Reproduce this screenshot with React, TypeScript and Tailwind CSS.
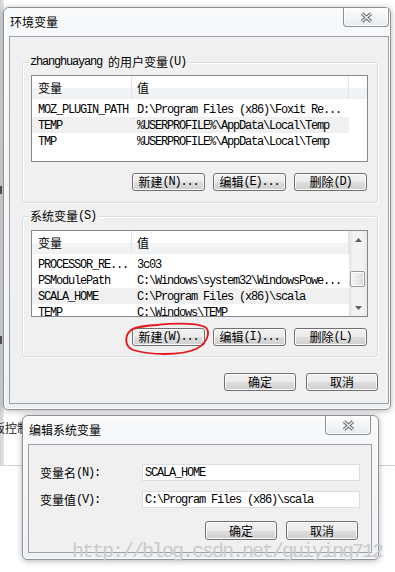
import React from "react";

const cjk = "font-['Noto_Sans_CJK_SC',sans-serif]";
const mono = "font-['Liberation_Mono','Noto_Sans_CJK_SC',monospace] tracking-[-1.2px]";

function M({ children }: { children: React.ReactNode }) {
  return <span className={mono}>{children}</span>;
}

function WinButton({ children, className = "" }: { children: React.ReactNode; className?: string }) {
  return (
    <div
      className={`flex items-center justify-center rounded-[3px] border border-[#707070] bg-[linear-gradient(#f2f2f2_0%,#ebebeb_50%,#dddddd_51%,#cfcfcf_100%)] text-[12px] leading-none text-black shadow-[inset_0_0_0_1px_#fbfbfb] ${className}`}
    >
      {children}
    </div>
  );
}

function CloseButton() {
  return (
    <div className="flex h-[19px] w-[46px] items-center justify-center rounded-b-[4px] border border-t-0 border-[#8a9097] bg-[linear-gradient(#fdfdfd,#e8ebee)] shadow-[inset_0_0_0_1px_rgba(255,255,255,0.8)]">
      <svg width="13" height="11" viewBox="0 0 13 11">
        <path d="M2 1.5 L11 9.5 M11 1.5 L2 9.5" stroke="#5f666e" strokeWidth="3.4" fill="none" />
        <path d="M2 1.5 L11 9.5 M11 1.5 L2 9.5" stroke="#f4f5f7" strokeWidth="1.3" fill="none" />
      </svg>
    </div>
  );
}

type Row = { name: string; value: string; hl?: boolean };

function Header({ full }: { full: boolean }) {
  return (
    <div className="flex h-[23px] shrink-0 bg-[linear-gradient(#ffffff_0%,#ffffff_50%,#f3f4f6_51%,#f0f1f3_100%)] text-[12px] text-black">
      <div className={`flex w-[100px] items-center border-r border-[#e1e3e6] pl-[6px] ${cjk}`}>变量</div>
      <div className={`flex w-[217px] items-center border-r border-[#e1e3e6] pl-[5px] ${cjk}`}>值</div>
      {full && <div className="flex-1" />}
    </div>
  );
}

function Rows({ rows }: { rows: Row[] }) {
  return (
    <div className="pt-[2px]">
      {rows.map((r) => (
        <div
          key={r.name}
          className={`flex h-[16px] w-[317px] items-center text-[12px] leading-none text-black ${r.hl ? "bg-[#f0f0f0]" : ""}`}
        >
          <div className="w-[100px] shrink-0 overflow-hidden whitespace-nowrap pl-[6px]">
            <M>{r.name}</M>
          </div>
          <div className="whitespace-nowrap pl-[5px]">
            <M>{r.value}</M>
          </div>
        </div>
      ))}
    </div>
  );
}

function Scrollbar() {
  return (
    <div className="flex w-[18px] flex-col bg-[linear-gradient(90deg,#e3e3e3,#f3f3f3_25%,#f3f3f3_75%,#e8e8e8)]">
      <div className="flex h-[17px] items-center justify-center">
        <svg width="7" height="4" viewBox="0 0 7 4">
          <path d="M3.5 0 L7 4 L0 4 Z" fill="#606060" />
        </svg>
      </div>
      <div className="flex-1">
        <div className="ml-[1px] mt-[23px] h-[16px] w-[15px] rounded-[2px] border border-[#979797] bg-[linear-gradient(90deg,#f6f6f6,#e9e9e9_50%,#d9d9d9)] shadow-[inset_0_0_0_1px_#fcfcfc]" />
      </div>
      <div className="flex h-[17px] items-center justify-center">
        <svg width="7" height="4" viewBox="0 0 7 4">
          <path d="M0 0 L7 0 L3.5 4 Z" fill="#606060" />
        </svg>
      </div>
    </div>
  );
}

function GroupBox({ label, children, className = "" }: { label: React.ReactNode; children: React.ReactNode; className?: string }) {
  return (
    <div className={`relative rounded-[3px] border border-[#d5dfe5] shadow-[inset_1px_1px_0_#ffffff,1px_1px_0_#ffffff] ${className}`}>
      <div className="absolute left-[6px] top-[-8px] flex h-[14px] items-center bg-[#f0f0f0] pl-[1px] pr-[2px] text-[12px] leading-none text-black">
        {label}
      </div>
      {children}
    </div>
  );
}

const userRows: Row[] = [
  { name: "MOZ_PLUGIN_PATH", value: "D:\\Program Files (x86)\\Foxit Re..." },
  { name: "TEMP", value: "%USERPROFILE%\\AppData\\Local\\Temp", hl: true },
  { name: "TMP", value: "%USERPROFILE%\\AppData\\Local\\Temp" },
];

const sysRows: Row[] = [
  { name: "PROCESSOR_RE...", value: "3c03" },
  { name: "PSModulePath", value: "C:\\Windows\\system32\\WindowsPowe..." },
  { name: "SCALA_HOME", value: "C:\\Program Files (x86)\\scala", hl: true },
  { name: "TEMP", value: "C:\\Windows\\TEMP" },
];

function BtnLabel({ zh, rest }: { zh: string; rest: string }) {
  return (
    <span className="flex items-center">
      <span className={cjk}>{zh}</span>
      <M>{rest}</M>
    </span>
  );
}

export default function App() {
  return (
    <div className="relative h-[572px] w-[395px] overflow-hidden bg-white">
      {/* desktop behind the dialogs */}
      <div className="absolute left-0 top-0 h-[465px] w-[4px] bg-[linear-gradient(90deg,#cfd1d4,#e6e7e9)]" />
      <div className="absolute left-0 top-[186px] h-[8px] w-[2px] bg-[#555]" />
      <div className="absolute left-0 top-[336px] h-[8px] w-[2px] bg-[#555]" />
      <div className={`absolute left-[-7px] top-[421px] text-[12px] leading-[14px] text-[#222] ${cjk}`}>板控制</div>
      <div className="absolute left-0 right-0 top-[465px] h-px bg-[#d2d2d2]" />

      <div className="relative flex flex-col">
        {/* 环境变量 */}
        <div className="ml-[3px] mt-[7px] flex w-[388px] flex-col rounded-t-[6px] rounded-b-[5px] border border-[#8c9298] bg-[linear-gradient(#f8f9fa,#eef1f4)] pb-[5px] pl-[5px] pr-[1px] shadow-[0_1px_6px_rgba(0,0,0,0.3),inset_0_0_0_1px_rgba(255,255,255,0.7)]">
          <div className="flex h-[28px] items-start justify-between">
            <div className={`mt-[7px] pl-[1px] text-[12px] leading-[14px] text-black ${cjk}`}>环境变量</div>
            <CloseButton />
          </div>
          <div className="flex flex-col border border-[#9ba0a6] bg-[#f0f0f0] pb-[12px] pl-[12px] pr-[10px] pt-[25px]">
            <GroupBox
              className="pb-[11px] pl-[8px] pr-[9px] pt-[12px]"
              label={
                <>
                  <M>zhanghuayang&nbsp;</M>
                  <span className={cjk}>的用户变量</span>
                  <M>(U)</M>
                </>
              }
            >
              <div className="flex h-[87px] overflow-hidden border border-[#828790] bg-white">
                <div className="flex flex-1 flex-col">
                  <Header full />
                  <Rows rows={userRows} />
                </div>
              </div>
              <div className="mt-[11px] flex justify-end gap-[8px] pr-[1px]">
                <WinButton className="h-[18px] w-[73px]">
                  <BtnLabel zh="新建" rest="(N)..." />
                </WinButton>
                <WinButton className="h-[18px] w-[73px]">
                  <BtnLabel zh="编辑" rest="(E)..." />
                </WinButton>
                <WinButton className="h-[18px] w-[73px]">
                  <BtnLabel zh="删除" rest="(D)" />
                </WinButton>
              </div>
            </GroupBox>

            <GroupBox
              className="mt-[13px] pb-[10px] pl-[8px] pr-[9px] pt-[13px]"
              label={
                <>
                  <span className={cjk}>系统变量</span>
                  <M>(S)</M>
                </>
              }
            >
              <div className="flex h-[87px] overflow-hidden border border-[#828790] bg-white">
                <div className="flex w-[317px] flex-col">
                  <Header full={false} />
                  <Rows rows={sysRows} />
                </div>
                <Scrollbar />
              </div>
              <div className="mt-[11px] flex justify-end gap-[8px] pr-[1px]">
                <WinButton className="h-[18px] w-[73px]">
                  <BtnLabel zh="新建" rest="(W)..." />
                </WinButton>
                <WinButton className="h-[18px] w-[73px]">
                  <BtnLabel zh="编辑" rest="(I)..." />
                </WinButton>
                <WinButton className="h-[18px] w-[73px]">
                  <BtnLabel zh="删除" rest="(L)" />
                </WinButton>
              </div>
            </GroupBox>

            <div className="mt-[16px] flex justify-end gap-[10px]">
              <WinButton className={`h-[18px] w-[72px] ${cjk}`}>确定</WinButton>
              <WinButton className={`h-[18px] w-[72px] ${cjk}`}>取消</WinButton>
            </div>
          </div>
        </div>

        {/* 编辑系统变量 */}
        <div className="ml-[22px] mt-[5px] flex w-[357px] flex-col rounded-t-[6px] rounded-b-[5px] border border-[#8c9298] bg-[linear-gradient(#f8f9fa,#eef1f4)] pb-[6px] pl-[5px] pr-[6px] shadow-[0_1px_6px_rgba(0,0,0,0.3),inset_0_0_0_1px_rgba(255,255,255,0.7)]">
          <div className="flex h-[28px] items-start justify-between">
            <div className={`mt-[7px] pl-[1px] text-[12px] leading-[14px] text-black ${cjk}`}>编辑系统变量</div>
            <div className="mr-[1px]">
              <CloseButton />
            </div>
          </div>
          <div className="flex flex-col border border-[#9ba0a6] bg-[#f0f0f0] pb-[12px] pl-[11px] pr-[11px] pt-[19px] text-[12px] text-black">
            <div className="flex h-[17px] items-center">
              <div className="flex w-[102px] items-center leading-none">
                <span className={cjk}>变量名</span>
                <M>(N):</M>
              </div>
              <div className="flex h-[17px] w-[218px] items-center border border-[#dcdde2] bg-white pl-[2px] leading-none">
                <M>SCALA_HOME</M>
              </div>
            </div>
            <div className="mt-[10px] flex h-[17px] items-center">
              <div className="flex w-[102px] items-center leading-none">
                <span className={cjk}>变量值</span>
                <M>(V):</M>
              </div>
              <div className="flex h-[17px] w-[218px] items-center border border-[#dcdde2] bg-white pl-[2px] leading-none">
                <M>{"C:\\Program Files (x86)\\scala"}</M>
              </div>
            </div>
            <div className="mt-[13px] flex justify-end gap-[9px] pr-[2px]">
              <WinButton className={`h-[19px] w-[72px] ${cjk}`}>确定</WinButton>
              <WinButton className={`h-[19px] w-[72px] ${cjk}`}>取消</WinButton>
            </div>
          </div>
        </div>
      </div>

      {/* watermark */}
      <div className="pointer-events-none absolute left-[72px] top-[542px] whitespace-nowrap font-['Liberation_Mono',monospace] text-[20px] leading-[20px] tracking-[-2px] text-[#cbcbcb]">
        http://blog.csdn.net/guiying712
      </div>

      {/* red hand-drawn mark */}
      <svg className="pointer-events-none absolute left-0 top-0" width="395" height="572" viewBox="0 0 395 572">
        <path
          d="M140 327 C165 323 195 322 205 327 C211 331 208 343 196 349 C180 356 150 355 133 350 C124 346 125 336 130 331 C134 327 145 325.5 158 325"
          stroke="#e5171e"
          strokeWidth="1.8"
          fill="none"
          strokeLinecap="round"
        />
      </svg>
    </div>
  );
}
